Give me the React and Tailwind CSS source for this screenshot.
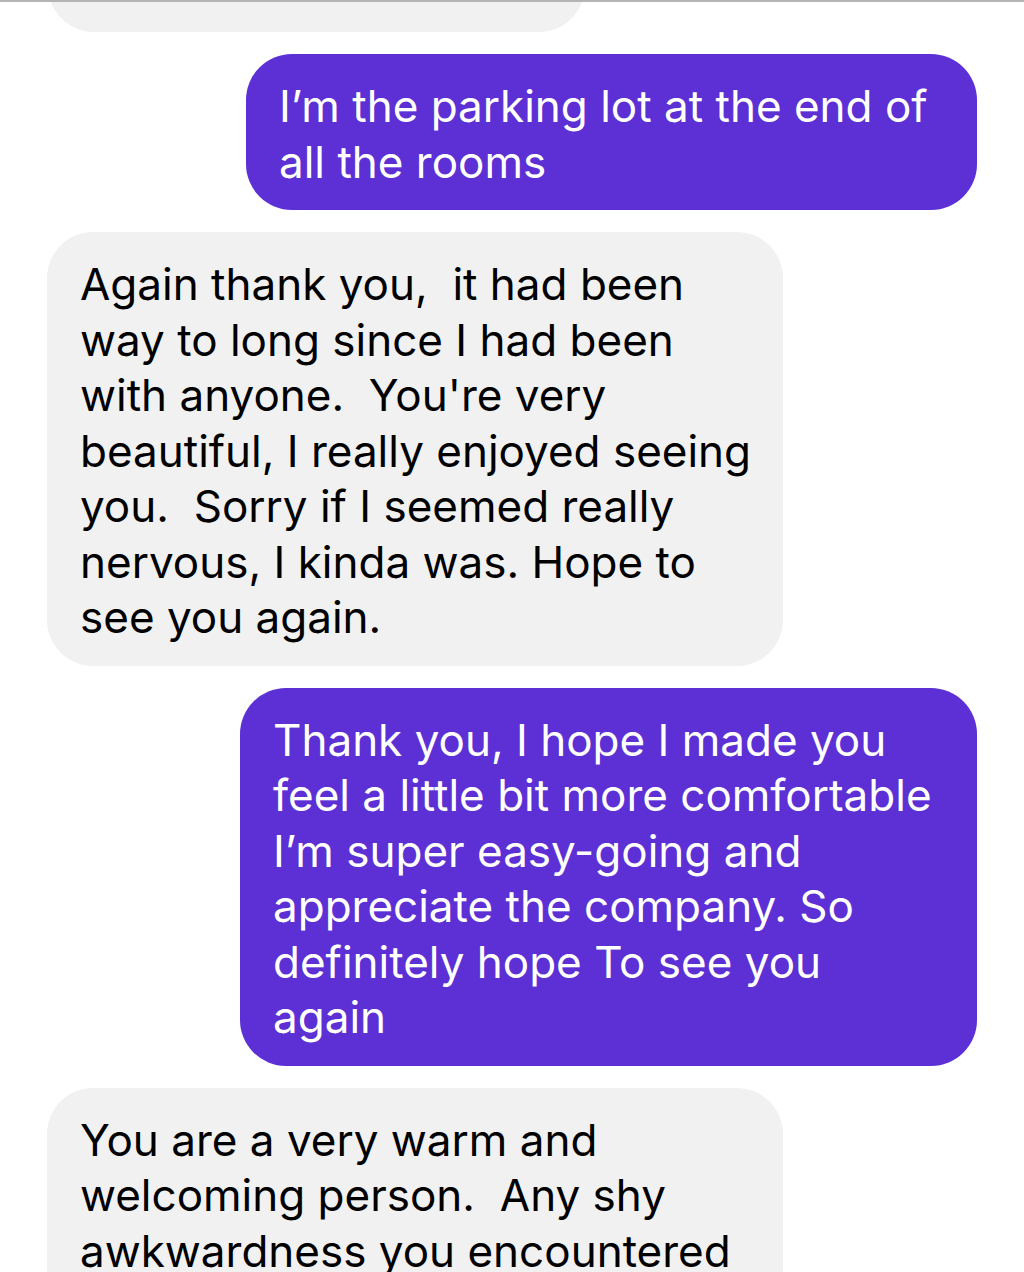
export default function App() {
  const messages = [
    { me: false, lines: ['', '', 'placeholder'], clip: true },
    { me: true, lines: ['I’m the parking lot at the end of', 'all the rooms'], width: 'w-[731px]' },
    {
      me: false,
      lines: [
        'Again thank you,  it had been',
        'way to long since I had been',
        'with anyone.  You\'re very',
        'beautiful, I really enjoyed seeing',
        'you.  Sorry if I seemed really',
        'nervous, I kinda was. Hope to',
        'see you again.',
      ],
      width: 'w-[736px]',
    },
    {
      me: true,
      lines: [
        'Thank you, I hope I made you',
        'feel a little bit more comfortable',
        'I’m super easy-going and',
        'appreciate the company. So',
        'definitely hope To see you',
        'again',
      ],
      width: 'w-[737px]',
    },
    {
      me: false,
      lines: ['You are a very warm and', 'welcoming person.  Any shy', 'awkwardness you encountered', 'was not noticed at all.'],
      width: 'w-[736px]',
    },
  ]

  return (
    <div
      className="relative w-[1024px] h-[1272px] overflow-hidden bg-white"
      style={{ fontFamily: 'Inter, "Noto Sans", sans-serif' }}
    >
      <div className="absolute top-0 left-0 right-0 h-[2px] bg-[#b4b4b4] z-10" />
      <div className="flex flex-col gap-[22px] px-[47px] mt-[-68px]">
        {messages.map((m, i) =>
          m.clip ? (
            <div key={i} className="self-start ml-px w-[537px] h-[100px] rounded-[46px] bg-[#f1f1f1]" />
          ) : (
            <div
              key={i}
              className={`${m.width} ${
                m.me ? 'self-end bg-[#5c30d4] text-white' : 'self-start bg-[#f1f1f1] text-black'
              } rounded-[46px] px-[33px] pt-[25px] pb-[20px] text-[44px] leading-[55.5px]`}
            >
              {m.lines.map((l, j) => (
                <div key={j} className="whitespace-pre">
                  {l}
                </div>
              ))}
            </div>
          )
        )}
      </div>
    </div>
  )
}
